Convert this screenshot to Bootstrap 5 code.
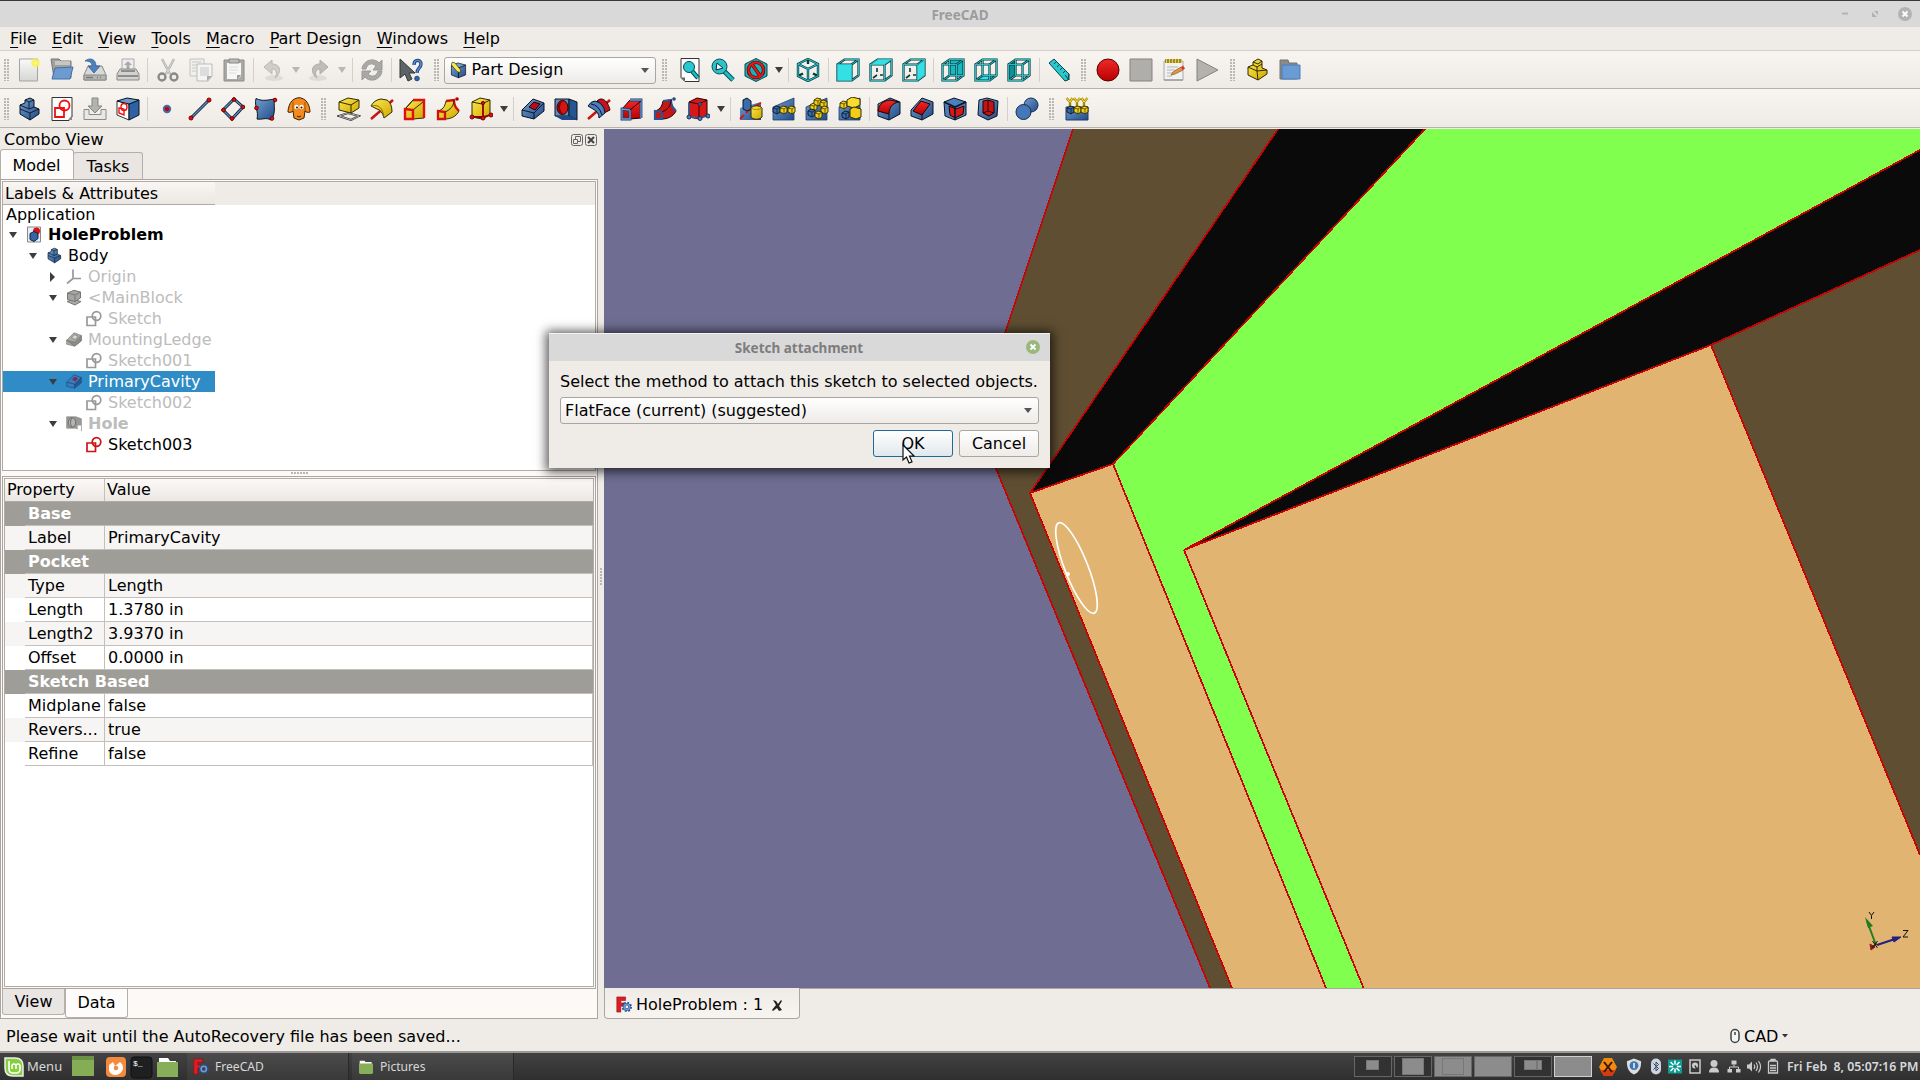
<!DOCTYPE html>
<html lang="en">
<head>
    <meta charset="UTF-8">
    <meta name="viewport" content="width=device-width, initial-scale=1.0">
    <title>FreeCAD</title>
    <link rel="stylesheet" href="https://cdn.jsdelivr.net/npm/bootstrap@5.3.3/dist/css/bootstrap.min.css">
    <script src="https://cdn.jsdelivr.net/npm/bootstrap@5.3.3/dist/js/bootstrap.bundle.min.js"></script>
    <style>
        body { width: 1920px; height: 1080px; overflow: hidden; background: #efebe7; color: #000; font: 16px/20px "DejaVu Sans", sans-serif; }
        svg { display: block; flex: none; overflow: visible; }
        .titlebar { height: 27px; background: #d9d9d9; border-top: 1px solid #3a373c; color: #9c9c9c; font: bold 13.5px/24px "Noto Sans", sans-serif; }
        .titlebar .caption-text { padding: 2px 0 0 94px; }
        .menubar { height: 24px; padding-left: 2.5px; border-bottom: 1px solid #d2cec9; }
        .menubar .nav-link { padding: 0 7.6px; color: #000; line-height: 24px; }
        .menubar u { text-underline-offset: 3px; text-decoration-thickness: 1px; }
        .toolbar { height: 38px; padding-top: 1px; border-bottom: 1px solid #b6b1ad; background: linear-gradient(#f8f5f1, #eeeae6); }
        .toolbar.second { height: 39px; padding-top: 2px; margin-bottom: 1px; }
        .slot { width: 33px; display: flex; justify-content: center; }
        .slot svg { width: 24px; height: 24px; }
        .tb-sep { width: 6.5px; display: flex; justify-content: center; }
        .tb-sep::after { content: ""; width: 1px; height: 24px; background: #d3cfca; }
        .second .tb-sep { width: 6.2px; }
        .arr { width: 13.2px; display: flex; justify-content: center; }
        .arr::after, .down { content: ""; border: 4.5px solid transparent; border-top: 6px solid #3d3d3d; border-bottom: 0; }
        .arr.off::after { border-top-color: #b9b6b3; }
        .grip { width: 16.6px; display: flex; justify-content: center; }
        .grip::after { content: ""; width: 5px; height: 22px; background: radial-gradient(circle at 1px 1px, #bbb6b1 0.8px, transparent 1px) 0 0/3px 3px; }
        .grip.first { width: 12.5px; }
        .boxy { border: 1px solid #a9a5a1; border-radius: 3px; background: linear-gradient(#fff, #eeebe8); }
        .workbench { width: 212px; height: 27px; padding: 0 6px 0 5px; }
        .workbench .down, .method .down { border-width: 4px 4px 0; border-top-width: 5px; border-top-color: #555; }
        .main { height: 890px; }
        .combo-view { width: 598px; }
        .combo-title { height: 21px; padding: 0 1px 0 4px; line-height: 21px; }
        .tabs-top { height: 29px; }
        .tab-a { border: 1px solid #b5b0ac; border-bottom: 0; border-radius: 3px 3px 0 0; text-align: center; }
        .tabs-top .on { width: 74px; background: #fdfcfa; height: 30px; line-height: 31px; padding-right: 1px; position: relative; z-index: 1; }
        .tabs-top .off { width: 70px; margin-left: -1px; height: 27px; line-height: 27px; background: #e9e5e2; }
        .frame { height: 840px; border: 1px solid #aaa5a1; background: #fdf9f6; padding: 1px 1px 0; }
        .tree { height: 290px; border: 1px solid #b0aba7; background: #fff; }
        .tree-head { height: 23px; background: #efebe7; }
        .tree-head div { width: 212px; height: 23px; padding-left: 2px; border-bottom: 1px solid #b0aba7; line-height: 23px; background: linear-gradient(#f9f6f3, #ebe7e3); }
        .tree-row { width: 212px; height: 21px; line-height: 21px; white-space: nowrap; color: #000; }
        .tree-row.app { height: 19px; padding-left: 3px; line-height: 20px; }
        .tree-row.off { color: #bcbcbc; }
        .tree-row.sel { background: #308cc6; color: #fff; }
        .tree-row .tw { width: 19px; flex: none; display: flex; justify-content: center; }
        .tree-row svg { width: 16px; height: 17px; margin-right: 6px; }
        .tw.open::after { content: ""; border: 4.5px solid transparent; border-top: 6px solid #3d3d3d; border-bottom: 0; }
        .tw.shut::after { content: ""; border: 5px solid transparent; border-left: 5px solid #3d3d3d; border-right: 0; }
        .indent { flex: none; }
        .i0 { width: 0; } .i1 { width: 20px; } .i2 { width: 40px; } .i3 { width: 60px; }
        .dots-h { height: 4px; width: 17px; margin: 1px auto 0; background: radial-gradient(circle at 1px 1px, #bbb6b1 0.8px, transparent 1px) 0 0/3px 4px repeat-x; }
        .props { height: 513px; border: 1px solid #aaa5a1; padding: 1px; }
        .props > div { height: 509px; border: 1px solid #b0aba7; background: #fff; }
        .prop-row { height: 24px; line-height: 23px; }
        .prop-row .pad { width: 20px; background: inherit; }
        .prop-row .pname { width: 80px; padding-left: 3px; border-right: 1px solid #c3c0bc; border-bottom: 1px solid #c3c0bc; white-space: nowrap; overflow: hidden; }
        .prop-row .pval { flex: 1; padding-left: 3px; border-right: 1px solid #c3c0bc; border-bottom: 1px solid #c3c0bc; }
        .prop-row.alt { background: #f6f5f3; }
        .prop-row.group { background: #9f9d98; color: #fff; font-weight: bold; }
        .prop-row.group .pval { padding-left: 3px; border-right: 0; }
        .prop-head { height: 23px; line-height: 22px; border-bottom: 1px solid #b0aba7; background: linear-gradient(#fcf9f7, #ebe7e4); }
        .prop-head .h1c { width: 100px; padding-left: 2px; border-right: 1px solid #c3c0bc; }
        .prop-head .h2c { padding-left: 2px; }
        .tab-b { border: 1px solid #b5b0ac; border-top: 0; border-radius: 0 0 3px 3px; text-align: center; }
        .tab-b.off { width: 63px; height: 26px; line-height: 25px; background: #e9e5e2; }
        .tab-b.on { width: 63px; height: 29px; line-height: 28px; background: #fdfcfa; }
        .vsplit { width: 6px; }
        .vsplit::after { content: ""; display: block; width: 2px; height: 18px; margin: 439px 0 0 2px; background: radial-gradient(circle at 1px 1px, #bbb6b1 0.8px, transparent 1px) 0 0/3px 3px; }
        .view3d { width: 1316px; height: 859px; }
        .mdi { height: 31px; }
        .mdi-tab { width: 196px; border: 1px solid #aaa5a1; border-top: 0; border-radius: 0 0 4px 4px; padding: 3px 0 0 11px; background: linear-gradient(#efebe7, #f8f5f1); }
        .mdi-rest { flex: 1; border-top: 1px solid #aaa5a1; }
        .status { height: 32px; padding-left: 6px; line-height: 35px; }
        .mouse-nav { width: 189px; padding-top: 2px; }
        .taskbar { height: 29px; border-top: 2px solid #9c9996; background: linear-gradient(#424242, #2f2f2f); color: #d8d8d8; font: 13px/25px "Noto Sans", sans-serif; }
        .menu-label { width: 35px; margin-left: 3px; }
        .task { height: 27px; width: 162px; margin-right: 3px; padding-left: 6px; background: linear-gradient(#4b4b4b, #393939); border-right: 1px solid #292929; font-size: 12.1px; }
        .task span { margin-left: 6px; }
        .ws { width: 38px; height: 21px; margin-right: 2px; border: 1px solid #666; background: #323232; display: flex; align-items: center; justify-content: center; }
        .ws.full { background: #8c8c8c; }
        .ws.cur { border-color: #d0d0d0; background: #8c8c8c; }
        .ws i { width: 13px; height: 10px; margin-bottom: 3px; background: #8c8c8c; border: 1px solid #777; }
        .ws i.big { width: 22px; height: 17px; margin: 0; background: #8c8c8c; border-color: #777; }
        .ws i.thin { width: 5px; }
        .tray svg { width: 16px; height: 17px; }
        .tray .cell { display: flex; justify-content: center; width: 19.6px; }
        .tray .cell.c-x { width: 28px; }
        .tray .cell.c-x svg { width: 18px; height: 18px; }
        .tray .cell.c-sh { width: 24px; }
        .clock { width: 129px; margin: 0 4px 0 4px; font-weight: 600; font-size: 12.3px; white-space: nowrap; color: #d6d9dd; }
        .dialog-win { position: absolute; left: 549px; top: 333px; width: 501px; height: 135px; background: #efebe7; border-top: 1px solid #f3f3f3; box-shadow: 0 1px 10px 3px rgba(0,0,0,.65); }
        .dlg-title { height: 27px; background: #d9d9d9; color: #7d7d7d; font: bold 13.5px/27px "Noto Sans", sans-serif; }
        .dlg-title .caption-text { padding: 1px 0 0 23px; }
        .dlg-title svg { margin: -1px 10px 0 0; }
        .dlg-body { padding: 10px 11px 0 11px; }
        .dlg-body p { white-space: nowrap; line-height: 22px; margin-bottom: 4px; }
        .method { height: 27px; padding: 0 6px 0 4px; }
        .btn-line { gap: 6px; margin-top: 6px; }
        .dlg-body .btn { width: 80px; height: 27px; padding: 0; border: 1px solid #a9a5a1; border-radius: 3px; color: #000; font-size: 16px; line-height: 25px; background: linear-gradient(#fff, #eeebe8); }
        .dlg-body .btn.ok { border-color: #1f6a9c; background: linear-gradient(#fff, #e0e8ec); }
        .pointer { position: absolute; left: 902px; top: 444px; }
    </style>
</head>
<body>

<svg width="0" height="0" class="position-absolute">
    <defs>
        <linearGradient id="gb" x1="0" y1="0" x2="1" y2="1"><stop offset="0" stop-color="#729fcf"/><stop offset="1" stop-color="#204a87"/></linearGradient>
        <linearGradient id="gy" x1="0" y1="0" x2="1" y2="1"><stop offset="0" stop-color="#fce94f"/><stop offset="1" stop-color="#d0a800"/></linearGradient>
        <linearGradient id="gr" x1="0" y1="0" x2="0" y2="1"><stop offset="0" stop-color="#ef2929"/><stop offset="1" stop-color="#b80000"/></linearGradient>
        <linearGradient id="gg" x1="0" y1="0" x2="0" y2="1"><stop offset="0" stop-color="#fafafa"/><stop offset="1" stop-color="#d5d5d3"/></linearGradient>
        <radialGradient id="glow"><stop offset="0" stop-color="#ffff60"/><stop offset=".5" stop-color="#f8f060"/><stop offset="1" stop-color="#f8f060" stop-opacity="0"/></radialGradient>
    </defs>

    <!-- file toolbar -->
    <symbol id="new" viewBox="0 0 24 24"><path d="M2.500 1h18v22h-18z" fill="url(#gg)" stroke="#a5a5a0"/><circle cx="18.500" cy="5" r="5.500" fill="url(#glow)"/></symbol>
    <symbol id="open" viewBox="0 0 24 24"><path d="M1 1h8l2 2h10v17H4z" fill="#a0a09c" stroke="#777"/><path d="M5 4h15M5 6h15" stroke="#eee"/><path d="M5 10l18-1-3 12H2z" fill="#6d9bd0" stroke="#3f70ad"/></symbol>
    <symbol id="save" viewBox="0 0 24 24"><path d="M5 8h14l4 9v5H1v-5z" fill="#d9d9d6" stroke="#888"/><path d="M1 17h22v5H1z" fill="#b5b5b1" stroke="#888"/><path d="M3 19.500h7M14 19.500h1m2 0h1" stroke="#777" stroke-width="1.500"/><path d="M2 3c5-4 11-2 11 5h4l-6 7-6-7h4c0-4-3-5-7-5z" fill="#4d82bf" stroke="#28558d" stroke-width=".7"/></symbol>
    <symbol id="print" viewBox="0 0 24 24"><path d="M6 1h12v12H6z" fill="#eee" stroke="#aaa"/><path d="M12 3l4 4h-2.500v5h-3V7H8z" fill="#aaa"/><path d="M4 11h16l3 5v6H1v-6z" fill="#d2d2cf" stroke="#888"/><path d="M5 13h14M2 18h20" stroke="#777" stroke-width="1.300"/></symbol>
    <symbol id="cut" viewBox="0 0 24 24"><path d="M6 1l8 15M18 1l-8 15" stroke="#aaa" stroke-width="2.400"/><path d="M6 1l8 15M18 1l-8 15" stroke="#e4e4e4" stroke-width=".8"/><circle cx="6" cy="19" r="3.500" fill="none" stroke="#898989" stroke-width="2.300"/><circle cx="18" cy="19" r="3.500" fill="none" stroke="#898989" stroke-width="2.300"/></symbol>
    <symbol id="copy" viewBox="0 0 24 24"><path d="M1 1h14v17H1z" fill="#efefed" stroke="#c2c2c0"/><path d="M3 4h9M3 7h9M3 10h4M3 13h4" stroke="#c8c8c8"/><path d="M8 6h15v12l-4 5H8z" fill="#f4f4f2" stroke="#bbb"/><path d="M11 9h9v9h-9z" fill="#ddd"/><path d="M23 18h-5v5z" fill="#aaa"/></symbol>
    <symbol id="paste" viewBox="0 0 24 24"><path d="M2 2h20v21H2z" fill="#aaa9a5" stroke="#8c8c88"/><path d="M5 5h14v13l-3 3H5z" fill="#f7f7f5"/><path d="M7 1h10v4H7z" fill="#bbb" stroke="#888"/><path d="M7 9h9M7 12h9M7 15h7" stroke="#ddd"/><path d="M19 17h-4v5z" fill="#999"/></symbol>
    <symbol id="undo" viewBox="0 0 24 24"><ellipse cx="13" cy="20" rx="9" ry="3" fill="#dedbd8"/><path d="M3 9l8-7v4c9 0 10 9 3 14 3-5 1-9-3-9v5z" fill="#cfcdca" stroke="#bab7b3"/></symbol>
    <symbol id="redo" viewBox="0 0 24 24"><ellipse cx="11" cy="20" rx="9" ry="3" fill="#dedbd8"/><path d="M21 9l-8-7v4C4 6 3 15 10 20c-3-5-1-9 3-9v5z" fill="#bfbdba" stroke="#aeaba7"/></symbol>
    <symbol id="refresh" viewBox="0 0 24 24"><path d="M2 11c1-9 12-12 17-6l3-3v10h-9l3-4c-4-4-9-2-10 3zM22 13c-1 9-12 12-17 6l-3 3V13h9l-3 3c4 4 9 2 10-3z" fill="#a9a8a4" stroke="#999"/></symbol>
    <symbol id="whatis" viewBox="0 0 24 24"><path d="M1 1v19l5-4 3 7 4-2-3-6h6z" fill="#5d6466" stroke="#303638"/><path d="M15 7c0-6 7-6 7-1 0 4-4 4-4 9" fill="none" stroke="#204a87" stroke-width="3.400"/><path d="M15 7c0-6 7-6 7-1 0 4-4 4-4 9" fill="none" stroke="#6090c8" stroke-width="1.400"/><circle cx="18" cy="20.500" r="2.300" fill="#3465a4" stroke="#204a87"/></symbol>
    <symbol id="wb" viewBox="0 0 24 24"><path d="M2 6l10 3v14L2 19zM12 9l10-4v14l-10 4z" fill="url(#gb)" stroke="#0b1521"/><path d="M2 6l9-4 11 3-10 4z" fill="#729fcf" stroke="#0b1521"/><path d="M3 1l4 1 8 10-1 4-4-2L2 5z" fill="#fce94f" stroke="#403800"/></symbol>

    <!-- view toolbar -->
    <symbol id="fitall" viewBox="0 0 24 24"><path d="M3 .5h18v23H7l-4-4z" fill="#fdfdfd" stroke="#333"/><path d="M3 19.500h4v4z" fill="#666"/><path d="M14 13l6 7" stroke="#0b4a50" stroke-width="4.500"/><path d="M14 13l6 7" stroke="#16c0c8" stroke-width="2.500"/><circle cx="11" cy="9" r="5.500" fill="#28c9cf" stroke="#0b4a50"/></symbol>
    <symbol id="fitsel" viewBox="0 0 24 24"><path d="M13 13l9 9" stroke="#0b4a50" stroke-width="5"/><path d="M13 13l9 9" stroke="#16c0c8" stroke-width="3"/><circle cx="8.500" cy="8.500" r="7.500" fill="#2cc2c8" stroke="#0b4a50"/><path d="M5 12l1-7 6 5z" fill="#e8ffff" stroke="#124"/></symbol>
    <symbol id="drawstyle" viewBox="0 0 24 24"><path d="M12 .5l11 5.500v12l-11 5.500L1 18V6z" fill="#16b4bc" stroke="#08484c"/><circle cx="12" cy="12" r="7.600" fill="none" stroke="#400" stroke-width="3.400"/><path d="M7.500 5.500l9 13" stroke="#400" stroke-width="3.400"/><circle cx="12" cy="12" r="7.600" fill="none" stroke="#e01818" stroke-width="2.200"/><path d="M7.500 5.500l9 13" stroke="#e01818" stroke-width="2.200"/></symbol>
    <symbol id="iso" viewBox="0 0 24 24"><path d="M12 1l10 5v12l-10 5-10-5V6zM2 6l10 5 10-5M12 11v12M12 1v5M2 18l5-2.500m15 2.500l-5-2.500" fill="none" stroke="#06383c" stroke-width="2.400"/><path d="M12 1l10 5v12l-10 5-10-5V6zM2 6l10 5 10-5M12 11v12" fill="none" stroke="#22c3c9" stroke-width="1.100"/></symbol>
    <g id="wirebox"><path d="M1.500 6.500h14v16h-14zM1.500 6.500l7-5h14v16l-7 5M15.500 6.500l7-5M8.500 1.500v16h14M8.500 17.500l-7 5" fill="none" stroke="#06383c" stroke-width="2.200"/><path d="M1.500 6.500h14v16h-14zM1.500 6.500l7-5h14v16l-7 5M15.500 6.500l7-5M8.500 1.500v16h14M8.500 17.500l-7 5" fill="none" stroke="#2acbd0" stroke-width=".9"/></g>
    <g id="shellbox"><path d="M1.500 6.500h14v16h-14zM1.500 6.500l7-5h14v16l-7 5M15.500 6.500l7-5" fill="none" stroke="#06383c" stroke-width="2.200"/><path d="M1.500 6.500h14v16h-14zM1.500 6.500l7-5h14v16l-7 5M15.500 6.500l7-5" fill="none" stroke="#2acbd0" stroke-width=".9"/></g>
    <symbol id="vfront" viewBox="0 0 24 24"><use href="#shellbox"/><path d="M2 7h13v15H2z" fill="#34dfe6"/></symbol>
    <symbol id="vtop" viewBox="0 0 24 24"><use href="#shellbox"/><path d="M2.500 6.300l6.300-4.500H22l-6.500 4.500z" fill="#34dfe6"/><path d="M4 20l4-3M8 10v4m3 3h3" stroke="#06383c" stroke-width="1.600"/></symbol>
    <symbol id="vright" viewBox="0 0 24 24"><use href="#shellbox"/><path d="M16 7l6-4.500v15L16 22z" fill="#34dfe6"/><path d="M4 20l4-3M8 10v4m3 3h3" stroke="#06383c" stroke-width="1.600"/></symbol>
    <symbol id="vrear" viewBox="0 0 24 24"><path d="M8.500 2h14v15h-14z" fill="#1cb6bd"/><use href="#wirebox"/></symbol>
    <symbol id="vbottom" viewBox="0 0 24 24"><path d="M2 22l7-5h13l-6 5z" fill="#34dfe6"/><use href="#wirebox"/></symbol>
    <symbol id="vleft" viewBox="0 0 24 24"><path d="M2 7l6-5v15l-6 5z" fill="#148e94"/><use href="#wirebox"/></symbol>
    <symbol id="measure" viewBox="0 0 24 24"><path d="M2 5l5-4 15 15-1 6-3 1z" fill="#28c6cd" stroke="#06484c"/><path d="M7 1l15 15v6L18 17M9 4l-2 2m5 1l-2 2m5 1l-2 2m5 1l-2 2" fill="none" stroke="#06484c"/></symbol>
    <symbol id="rec" viewBox="0 0 24 24"><circle cx="12" cy="12" r="11" fill="url(#gr)" stroke="#500"/></symbol>
    <symbol id="stop" viewBox="0 0 24 24"><path d="M1 1h22v22H1z" fill="#b0aeab" stroke="#85837f"/></symbol>
    <symbol id="macro" viewBox="0 0 24 24"><path d="M2 3h19v19H2z" fill="#f1f1f1" stroke="#aaa"/><path d="M2 22h19" stroke="#888"/><path d="M3 1h17v4H3z" fill="#a28a1d"/><path d="M4.500 1v4m3-4v4m3-4v4m3-4v4m3-4v4m3-4v4" stroke="#e3cc4d"/><path d="M5 9h11M5 12h8M5 15h5M5 18h5" stroke="#b5b5b5"/><path d="M9 17l2-3 8-5 2 3-8 4z" fill="#e39a3c" stroke="#85511b" stroke-width=".7"/><path d="M19 9l2 3 2-1.500-2-3z" fill="#d33"/></symbol>
    <symbol id="play" viewBox="0 0 24 24"><path d="M2 1l21 11L2 23z" fill="#b4b2af" stroke="#85837f"/></symbol>
    <symbol id="part" viewBox="0 0 24 24"><path d="M3 9l5-2V4l5-3 4 2v7l5 2v4l-9 6-10-5z" fill="url(#gy)" stroke="#302b00"/><path d="M3 9l9 4 10-1M8 7l4 2 5-3M12 9v4l1 9M8 4l5 2 4-3" fill="none" stroke="#302b00"/></symbol>
    <symbol id="group" viewBox="0 0 24 24"><path d="M2 2h8l1 3h8v16H2z" fill="#8a8b89" stroke="#737472"/><path d="M4 7h18v14H4z" fill="#699bd4" stroke="#4c7db5"/></symbol>

    <!-- part design -->
    <symbol id="body" viewBox="0 0 24 24"><path d="M3 8l5-2V3l5-2 4 2v7l5 2v5l-9 6-10-6z" fill="url(#gb)" stroke="#0b1521"/><path d="M8 3l4 2 5-2M12 5v7l5-2M12 12l-9-4M13 23v-7l9-4M13 16l-10-4" fill="none" stroke="#0b1521" stroke-width=".9"/></symbol>
    <symbol id="sketch" viewBox="0 0 24 24"><path d="M2 .5h20V20l-3 3.500H2z" fill="#fdfdfd" stroke="#333"/><path d="M18 23l4-5v5z" fill="#888"/><path d="M5 11h9v9H5z" fill="none" stroke="#e11" stroke-width="1.800"/><circle cx="14.500" cy="8.500" r="5" fill="none" stroke="#e11" stroke-width="1.800"/></symbol>
    <symbol id="import" viewBox="0 0 24 24"><path d="M1 12.500h5v5h12v-5h5v10H1z" fill="#e8e8e6" stroke="#8a8a88"/><path d="M9 1h6v8h4l-7 7-7-7h4z" fill="#b2b2af" stroke="#868684"/></symbol>
    <symbol id="mapsk" viewBox="0 0 24 24"><path d="M1 4l12 3v16L1 18z" fill="#fff" stroke="#333"/><path d="M13 7l10-4v15l-10 5z" fill="#2e62a4" stroke="#0b1521"/><path d="M1 4l10-3 12 2-10 4z" fill="#6c9acc" stroke="#0b1521"/><ellipse cx="8" cy="10" rx="3" ry="3.500" fill="none" stroke="#e11" stroke-width="1.400"/><path d="M3 11l5 1v6l-5-2z" fill="none" stroke="#e11" stroke-width="1.400"/></symbol>
    <symbol id="point" viewBox="0 0 24 24"><circle cx="12" cy="12" r="4.200" fill="#3b6db0"/><circle cx="12" cy="12" r="2.300" fill="#d00000"/></symbol>
    <symbol id="line" viewBox="0 0 24 24"><path d="M3 21L21 3" stroke="#0b1521" stroke-width="3"/><path d="M3 21L21 3" stroke="#5b8cc6" stroke-width="1.400"/><g fill="#d11" stroke="#700"><circle cx="3" cy="21" r="2"/><circle cx="21" cy="3" r="2"/></g></symbol>
    <symbol id="plane" viewBox="0 0 24 24"><path d="M13 2l9 8-11 12-9-9z" fill="none" stroke="#0b1521" stroke-width="3"/><path d="M13 2l9 8-11 12-9-9z" fill="none" stroke="#5b8cc6" stroke-width="1.400"/><g fill="#d11" stroke="#700"><circle cx="13" cy="2.500" r="1.800"/><circle cx="22" cy="10" r="1.800"/><circle cx="11" cy="21.500" r="1.800"/><circle cx="2.500" cy="13" r="1.800"/></g></symbol>
    <symbol id="binder" viewBox="0 0 24 24"><path d="M2 1.500c7 3.500 13 1 19 .5-2 7 1 9-2 18l-2 3c-5-3-9 0-14-1 2-8-3-12-1-20.500z" fill="url(#gb)" stroke="#0b1521"/><g fill="#d11" stroke="#700"><circle cx="2.500" cy="11" r="1.800"/><circle cx="21" cy="3" r="1.800"/><circle cx="18" cy="21.500" r="1.800"/></g></symbol>
    <symbol id="clone" viewBox="0 0 24 24"><path d="M6 3c4-3 8-3 12 0 3 2 5 8 5 12-2 1-4 0-5-1l-1 7-5 2-5-2-1-7c-1 1-3 2-5 1 0-4 2-10 5-12z" fill="#f28a1e" stroke="#3a1d00"/><path d="M6 5v9m12-9v9" stroke="#8f4a00" stroke-width=".8"/><circle cx="9.500" cy="10" r="2.200" fill="#fff"/><circle cx="14.500" cy="10" r="2.200" fill="#fff"/><circle cx="10" cy="10.500" r="1" fill="#111"/><circle cx="14.500" cy="10.500" r="1" fill="#111"/><path d="M10 19q2 2 4 0" fill="none" stroke="#3a1d00"/></symbol>
    <symbol id="pad" viewBox="0 0 24 24"><path d="M2 19l9-3 11 3-8 4z" fill="none" stroke="#333" stroke-width="2"/><path d="M2 19l9-3 11 3-8 4z" fill="none" stroke="#ddd" stroke-width=".7"/><path d="M2 5l9-4 11 2v8l-8 5-12-3z" fill="url(#gy)" stroke="#302b00"/><path d="M2 5l12 3 8-5M14 8v8" fill="none" stroke="#302b00"/></symbol>
    <symbol id="revol" viewBox="0 0 24 24"><path d="M1 22L23 3" stroke="#c11" stroke-width="2.500"/><path d="M1 9Q4 3 11 2l6 1q5 3 5 12l-8 6q-2-8-7-9z" fill="url(#gy)" stroke="#302b00"/><path d="M1 9l5-.500q7 1 8 12.500" fill="none" stroke="#7d6800" stroke-width=".9"/></symbol>
    <symbol id="loft" viewBox="0 0 24 24"><path d="M2 12L10 3h11v18L10 22H2z" fill="url(#gy)" stroke="#302b00"/><path d="M10 3h11v18M2 12l8 1v9H2z" fill="none" stroke="#d11" stroke-width="2.400"/><path d="M10.500 12.500L20 5M3 11l7-8" stroke="#302b00"/></symbol>
    <symbol id="pipe" viewBox="0 0 24 24"><path d="M10 4l8-1c0 6 2 8 5 11-3 6-9 8-14 8H2v-8c4-1 7-4 8-10z" fill="url(#gy)" stroke="#302b00"/><path d="M2 14l7 1v7H2zM10 4l8-1c0 6 2 8 5 11" fill="none" stroke="#c11" stroke-width="2.300"/><path d="M9 15c5-2 9-6 9-12" fill="none" stroke="#302b00"/><circle cx="21" cy="2" r="1.800" fill="#a00"/></symbol>
    <symbol id="prim" viewBox="0 0 24 24"><path d="M3 5l8-4 10 2v15l-8 4-10-2z" fill="url(#gy)" stroke="#302b00"/><path d="M3 5l10 2 8-4" fill="none" stroke="#302b00"/><path d="M14 6v13M3 20h11l7-2" fill="none" stroke="#8d0000" stroke-width="1.800"/><g fill="#d11" stroke="#700"><circle cx="14" cy="6" r="1.600"/><circle cx="3" cy="20" r="2"/><circle cx="14" cy="21" r="2"/><circle cx="22" cy="18" r="2"/></g></symbol>
    <symbol id="pocket" viewBox="0 0 24 24"><path d="M1 13L12 2l11 4v8L13 22 1 19z" fill="url(#gb)" stroke="#0b1521"/><path d="M1 13l12 3L23 6M13 16v6" fill="none" stroke="#0b1521"/><path d="M8 10l5-5 6 2-5 6z" fill="#b80f1c" stroke="#200"/></symbol>
    <symbol id="pocksel" viewBox="0 0 24 24"><path d="M1 13L12 2l11 4v8L13 22 1 19z" fill="#3a7cc0" stroke="#1a4a80"/><path d="M13 16L23 6v8l-10 8z" fill="#24578f"/><path d="M1 13l12 3L23 6M13 16v6" fill="none" stroke="#173f6d"/><path d="M9 9l4-4 5 2-4 5z" fill="#7c2a50"/></symbol>
    <symbol id="hole" viewBox="0 0 24 24"><path d="M1 2h14v17H1z" fill="#5d8dc4" stroke="#0b1521"/><path d="M15 2l8 3v18l-8-4z" fill="#26568f" stroke="#0b1521"/><path d="M1 19h14l8 4H8z" fill="#204a87"/><ellipse cx="8.500" cy="10.500" rx="5.500" ry="7" fill="#d51414" stroke="#200"/><path d="M9 4c-4 3-4 9 0 13-5 1-8-12 0-13z" fill="#7a0000"/></symbol>
    <symbol id="groove" viewBox="0 0 24 24"><path d="M1 22L23 3" stroke="#c11" stroke-width="2.500"/><path d="M10 4c5-5 11 0 13 9l-6 3c0-5-3-9-7-12z" fill="#c31220" stroke="#300"/><path d="M1 9Q4 4 8 4q9 2 10 12l-6 5q0-6-6-9z" fill="#4a7fbd" stroke="#0b1521"/><path d="M4 7q8 1 11 11" fill="none" stroke="#0b1521"/></symbol>
    <symbol id="subloft" viewBox="0 0 24 24"><path d="M2 12L10 3h11v18L10 22H2z" fill="url(#gr)" stroke="#200"/><path d="M10 3h11v18M2 12l8 1v9H2z" fill="none" stroke="#1d3d6b" stroke-width="2.800"/><path d="M10 3h11v18M2 12l8 1v9H2z" fill="none" stroke="#6a96cc" stroke-width="1.300"/><path d="M10 13L21 4" stroke="#300"/></symbol>
    <symbol id="subpipe" viewBox="0 0 24 24"><path d="M10 4l8-1c0 6 2 8 5 11-3 6-9 8-14 8H2v-8c4-1 7-4 8-10z" fill="#c71616" stroke="#200"/><path d="M2 14l7 1v7H2zM10 4l8-1c0 6 2 8 5 11" fill="none" stroke="#2b5694" stroke-width="2.200"/><path d="M9 15c5-2 9-6 9-12" fill="none" stroke="#300"/><circle cx="21" cy="2" r="1.800" fill="#2b4a7c"/></symbol>
    <symbol id="subprim" viewBox="0 0 24 24"><path d="M3 5l8-4 10 2v15l-8 4-10-2z" fill="#d81818" stroke="#200"/><path d="M3 5l10 2v15M13 7l8-4" fill="none" stroke="#300"/><path d="M3 6v14l11 1 7-2" fill="none" stroke="#345f98" stroke-width="1.700"/><g fill="#4d7fbd" stroke="#173257"><circle cx="14" cy="7" r="1.400"/><circle cx="3" cy="20" r="2"/><circle cx="14" cy="21.500" r="2"/><circle cx="22" cy="19" r="2"/></g></symbol>
    <g id="ramp"><path d="M1 10L22 1v22H1z" fill="url(#gb)" stroke="#1c3d6c" stroke-width=".8"/></g>
    <g id="ycube"><path d="M0 2l3-2 4 1v5L4 8 0 6z" fill="#f2cf16" stroke="#302b00" stroke-width=".9"/><path d="M0 2l4 1 3-2M4 3v5" fill="none" stroke="#302b00" stroke-width=".7"/></g>
    <g id="bcube"><path d="M0 2l3-2 4 1v5L4 8 0 6z" fill="#3a6bab" stroke="#0b1521" stroke-width=".9"/><path d="M0 2l4 1 3-2M4 3v5" fill="none" stroke="#0b1521" stroke-width=".7"/></g>
    <symbol id="mirror" viewBox="0 0 24 24"><path d="M1 11L22 5v18H1z" fill="url(#gb)"/><path d="M1 22l4-4m2-2l4-4M16 9l6-3" stroke="#d11" stroke-width="1.800"/><path d="M4 3l4-2 4 3v8l-4 2-4-2z" fill="#3a6bab" stroke="#0b1521"/><path d="M12 11c3-3 8-3 11 0v9c-3 3-8 3-11 0z" fill="url(#gy)" stroke="#302b00"/><path d="M12 11c3 2 8 2 11 0" fill="none" stroke="#a58700"/></symbol>
    <symbol id="linear" viewBox="0 0 24 24"><use href="#ramp"/><use href="#bcube" x="1" y="9"/><use href="#ycube" x="8" y="9"/><use href="#ycube" x="16" y="9"/></symbol>
    <symbol id="polar" viewBox="0 0 24 24"><use href="#ramp"/><use href="#ycube" x="5" y="6"/><use href="#ycube" x="9" y="1"/><use href="#ycube" x="15" y="3"/><use href="#ycube" x="16" y="9"/><use href="#bcube" x="3" y="12"/><use href="#ycube" x="10" y="14"/></symbol>
    <symbol id="multi" viewBox="0 0 24 24"><use href="#ramp"/><use href="#ycube" x="2" y="4"/><path d="M9 3l5-3 8 2v6l-6 3-7-2z" fill="#fadc2e" stroke="#302b00"/><use href="#bcube" x="4" y="14"/><path d="M12 12l4-2 7 2v8l-5 2-6-2z" fill="#f2cf16" stroke="#302b00"/></symbol>
    <symbol id="fillet" viewBox="0 0 24 24"><path d="M1 7L13 1l10 4v12l-11 6-11-4z" fill="url(#gb)" stroke="#0b1521"/><path d="M1 14c1-7 5-10 12-11l9 2c-7 1-10 6-10 12z" fill="url(#gr)" stroke="#200"/><path d="M12 17v6" stroke="#0b1521"/></symbol>
    <symbol id="chamfer" viewBox="0 0 24 24"><path d="M1 13L12 1l11 4v12l-11 6-11-4z" fill="url(#gb)" stroke="#0b1521"/><path d="M3 14L11 4l9 3-8 11z" fill="url(#gr)" stroke="#200"/><path d="M12 18v5" stroke="#0b1521"/></symbol>
    <symbol id="draft" viewBox="0 0 24 24"><path d="M1 5l10-4 12 4v13l-11 5-10-4z" fill="#4c7fbc" stroke="#0b1521"/><path d="M6 9l7 3 8-3-1 8-8 4-5-3z" fill="#d81818" stroke="#200"/><path d="M1 5l11 5 11-5M12 10v13" fill="none" stroke="#0b1521" stroke-width="1.600"/></symbol>
    <symbol id="thick" viewBox="0 0 24 24"><path d="M3 3l8-2 11 3-1 15-9 4-10-5z" fill="url(#gb)" stroke="#0b1521"/><path d="M7 4l5-1 6 2v11l-5 3-6-3z" fill="#c31414" stroke="#200"/><path d="M12 3v11l6 2M12 14l-5 2" fill="none" stroke="#400"/></symbol>
    <symbol id="boolean" viewBox="0 0 24 24"><circle cx="16" cy="8" r="7" fill="url(#gb)" stroke="#152c4d"/><circle cx="8.500" cy="15" r="7.500" fill="#4478b8" stroke="#152c4d"/></symbol>
    <symbol id="gears" viewBox="0 0 24 24"><path d="M1 10h22v13H1z" fill="url(#gb)" stroke="#1c3d6c"/><path d="M1.500 1l3.500 4 2.500-4M9 1l3 4 3-4M16.500 1l2.500 4 3.500-4M5 4v6m7-6v6m7-6v6" fill="none" stroke="#a88a00" stroke-width="2.400"/><path d="M1.500 1l3.500 4 2.500-4M9 1l3 4 3-4M16.500 1l2.500 4 3.500-4" fill="none" stroke="#f6e34b"/><use href="#bcube" x="2" y="9"/><use href="#ycube" x="9" y="9"/><use href="#ycube" x="16" y="9"/></symbol>

    <!-- tree -->
    <symbol id="doc" viewBox="0 0 16 16"><path d="M1.500.5h13v15h-13z" fill="#e9eef2" stroke="#8a8a8a"/><circle cx="10.500" cy="4.500" r="3.500" fill="#d11"/><path d="M4 7l4-2 4 2v5l-4 3-4-2z" fill="#3465a4" stroke="#10233c"/></symbol>
    <symbol id="origin" viewBox="0 0 16 16"><path d="M7 1v9h8M7 10l-6 5" fill="none" stroke="#999" stroke-width="1.700"/></symbol>
    <symbol id="padg" viewBox="0 0 16 16"><path d="M1 12l6-2 8 2-6 3.500z" fill="#aaa" stroke="#777"/><path d="M1.500 3.500L8 .8l6.500 1.700v6L9 12l-7.500-2z" fill="#a5a5a2" stroke="#777"/><path d="M1.500 3.500L9 5.500l5.500-3M9 6v6" fill="none" stroke="#787876"/></symbol>
    <symbol id="sk" viewBox="0 0 16 16"><path d="M1 6.500h8.500V15H1z" fill="none" stroke="currentColor" stroke-width="1.700"/><circle cx="10.500" cy="5.500" r="4.300" fill="none" stroke="currentColor" stroke-width="1.700"/></symbol>
    <symbol id="pockg" viewBox="0 0 24 24"><path d="M1 13L12 2l11 4v8L13 22 1 19z" fill="#aaa9a5" stroke="#777"/><path d="M1 13l12 3L23 6v8l-10 8z" fill="#8b8b88" stroke="#777"/><path d="M8 9l5-4 5 2-4 5z" fill="#d8d8d8" stroke="#777"/></symbol>
    <symbol id="holeg" viewBox="0 0 24 24"><path d="M1 2h14l8 3v18l-8-4H1z" fill="#999996" stroke="#858582"/><ellipse cx="9" cy="10.500" rx="5.500" ry="7" fill="#b4b4b2" stroke="#555"/><path d="M9 4c-3 3-3 9 0 13" fill="none" stroke="#666" stroke-width="1.500"/><path d="M20 15v8" stroke="#fff" stroke-width="5"/></symbol>

    <!-- panel -->
    <symbol id="fc" viewBox="0 0 20 20"><path d="M1 .5h11V5H6v3h4v4H6v7.500H1z" fill="#e01b24" stroke="#8a0c10" stroke-width=".7"/><circle cx="13.500" cy="13" r="5.300" fill="none" stroke="#2a518c" stroke-width="2.400" stroke-dasharray="2.200 1.960"/><circle cx="13.500" cy="13" r="3.300" fill="none" stroke="#2a518c" stroke-width="3.200"/><circle cx="13.500" cy="13" r="3.300" fill="none" stroke="#6d9ad0" stroke-width="2"/></symbol>
    <symbol id="folder" viewBox="0 0 20 20"><path d="M1 1h7l1 2h9v5H1z" fill="#fff"/><path d="M0 5h20v13q0 2-2 2H2q-2 0-2-2z" fill="#87ae58"/></symbol>
</svg>

<div class="titlebar d-flex align-items-center">
    <div class="caption-text flex-fill text-center">FreeCAD</div>
    <svg width="94" height="20" viewBox="0 0 94 20"><path d="M16 9.500h6" stroke="#b3b3b3" stroke-width="2"/><path d="M46 8v5h5zM48 7h4v4z" fill="#b3b3b3"/><circle cx="79" cy="10" r="7" fill="#b3b3b3"/><path d="M76.500 7.500l5 5m0-5l-5 5" stroke="#fff" stroke-width="1.800"/></svg>
</div>

<nav class="nav menubar flex-nowrap">
    <a class="nav-link"><u>F</u>ile</a>
    <a class="nav-link"><u>E</u>dit</a>
    <a class="nav-link"><u>V</u>iew</a>
    <a class="nav-link"><u>T</u>ools</a>
    <a class="nav-link"><u>M</u>acro</a>
    <a class="nav-link"><u>P</u>art Design</a>
    <a class="nav-link"><u>W</u>indows</a>
    <a class="nav-link"><u>H</u>elp</a>
</nav>

<div class="toolbar d-flex align-items-center" data-items="new open save print | cut copy paste | undo v- redo v- | refresh | whatis"></div>
<div class="toolbar second d-flex align-items-center" data-items="body sketch import mapsk | point line plane binder clone : pad revol loft pipe prim v | pocket hole groove subloft subpipe subprim v | mirror linear polar multi | fillet chamfer draft thick | boolean : gears"></div>

<div class="main d-flex">
    <div class="combo-view">
        <div class="combo-title d-flex justify-content-between align-items-center">
            <span>Combo View</span>
            <svg width="26" height="12" viewBox="0 0 26 12"><g fill="none" stroke="#666"><rect x=".5" y=".5" width="11" height="11" rx="2"/><path d="M2.500 5.500h4v4h-4zM4.500 5V2.500h5v5H7"/><rect x="14.500" y=".5" width="11" height="11" rx="2"/></g><path d="M17 3l6 6m0-6l-6 6" stroke="#444" stroke-width="2"/></svg>
        </div>
        <div class="tabs-top d-flex align-items-end">
            <div class="tab-a on">Model</div>
            <div class="tab-a off">Tasks</div>
        </div>
        <div class="frame">
            <div class="tree">
                <div class="tree-head"><div>Labels &amp; Attributes</div></div>
                <div class="tree-row app">Application</div>
                <div id="tree_rows"></div>
            </div>
            <div class="dots-h"></div>
            <div class="props">
                <div>
                    <div class="prop-head d-flex"><div class="h1c">Property</div><div class="h2c">Value</div></div>
                    <div id="prop_rows"></div>
                </div>
            </div>
            <div class="d-flex">
                <div class="tab-b off">View</div>
                <div class="tab-b on">Data</div>
            </div>
        </div>
    </div>
    <div class="vsplit"></div>
    <div>
        <svg class="view3d" viewBox="604 129 1316 859" style="overflow:hidden">
            <path d="M604 129h1316v859H604z" fill="#6f6e92"/>
            <path d="M1073 129H1920V988H1210L976 420z" fill="#5f4e32"/>
            <path d="M1278 129H1920V250L1711 345 1184 550 1030 493z" fill="#0a0a0a"/>
            <path d="M1425 129H1920V150L1184 550 1363.500 988H1326L1113 464z" fill="#80ff4f"/>
            <path d="M1030 493l83-29L1326 988H1232z" fill="#e1b471"/>
            <path d="M1184 550L1711 345 1920 855V988H1363.500z" fill="#e1b471"/>
            <g fill="none" stroke="#cc0000" stroke-width="1.700" shape-rendering="crispEdges">
                <path d="M1073 129L976 420 1210 988"/>
                <path d="M1278 129L1030 493l83-29L1425 129M1030 493l202 495M1113 464l213 524"/>
                <path d="M1920 150L1184 550 1711 345l209-95M1184 550l179.500 438M1711 345l209 510"/>
            </g>
            <ellipse cx="1076.500" cy="568" rx="11.500" ry="48.500" transform="rotate(-21.500 1076.500 568)" fill="none" stroke="#fff" stroke-width="1.700"/>
            <circle cx="1068" cy="574" r="2" fill="#fff"/>
            <path d="M1876 945l-9-24" stroke="#1f7d1f" stroke-width="2"/><path d="M1865 917l8 9-5 2z" fill="#1f7d1f"/>
            <path d="M1877 945l18-6" stroke="#202080" stroke-width="2"/><path d="M1901 937l-9 0 2 5z" fill="#202080" stroke="#202080"/>
            <path d="M1877 944l-6 3m-1-3l1 6 4-3z" fill="#8b1c1c" stroke="#8b1c1c"/>
            <g fill="none" stroke="#111"><path d="M1869 912l2.500 3.500 2.500-3.500m-2.500 3.500v3.500M1903 930.500h5l-5 6.500h5M1872.500 941l5 7m0-7l-5 7"/></g>
        </svg>
        <div class="mdi d-flex">
            <div class="mdi-tab d-flex align-items-center">
                <svg width="16" height="17"><use href="#fc"/></svg>
                <span class="ms-1">HoleProblem : 1</span>
                <svg class="ms-2" width="12" height="12" viewBox="0 0 12 12"><path d="M2 1l3 1 2 3 3-4 1 1-3 5 3 4-3 1-2-3-4 3-1-1 4-5z" fill="#222"/></svg>
            </div>
            <div class="mdi-rest"></div>
        </div>
    </div>
</div>

<div class="status d-flex justify-content-between">
    <span>Please wait until the AutoRecovery file has been saved...</span>
    <div class="mouse-nav d-flex align-items-center">
        <svg width="13" height="16" viewBox="0 0 13 16"><rect x="0" y="1.500" width="8" height="13" rx="4" fill="#f5f5f5" stroke="#3c4446" stroke-width="1.500"/><path d="M4 4v3" stroke="#3c4446" stroke-width="1.500"/></svg>
        <span>CAD</span>
        <svg class="ms-1" width="7" height="4"><path d="M0 0h6L3 3.500z" fill="#333"/></svg>
    </div>
</div>

<div class="taskbar d-flex align-items-center">
    <svg class="ms-1" width="20" height="20" viewBox="0 0 20 20"><path d="M1 1h10q8 0 8 8v10H9q-8 0-8-8z" fill="#87cf3e" stroke="#eee" stroke-width="1.500"/><path d="M5 4v8q0 4 4 4h3q4 0 4-4V9q0-2-2-2t-2 2v3m0-3q0-2-2-2t-2 2v3" fill="none" stroke="#fff" stroke-width="1.600"/></svg>
    <span class="menu-label">Menu</span>
    <svg width="125" height="24" viewBox="0 0 125 24">
        <path d="M10 1h22v20H10z" fill="#85ad56"/><path d="M10 1h22v4H10z" fill="#6c9145"/>
        <rect x="44" y="2" width="20" height="20" rx="4" fill="#f58a3c"/><path d="M47 10l4-3 2 4 5-4q5 4 2 9c-3 6-12 5-13-1z" fill="#fff"/><circle cx="54" cy="13" r="2.300" fill="#f58a3c"/>
        <rect x="69" y="2" width="21" height="21" rx="3" fill="#1d1f21" stroke="#111"/>
        <text x="71" y="11" fill="#fff" font-size="8" font-family="Liberation Mono">$_</text>
        <path d="M97 3h9l2 3h6v3H97z" fill="#fff"/><path d="M95 7h21v15H95z" fill="#87ae58"/>
    </svg>
    <div class="task d-flex align-items-center"><svg width="16" height="17"><use href="#fc"/></svg><span>FreeCAD</span></div>
    <div class="task d-flex align-items-center"><svg width="16" height="14"><use href="#folder"/></svg><span>Pictures</span></div>
    <div class="tray d-flex align-items-center ms-auto">
        <div class="ws"><i></i></div>
        <div class="ws"><i class="big"></i></div>
        <div class="ws full"><i class="big"></i></div>
        <div class="ws full"></div>
        <div class="ws"><i></i><i class="thin"></i></div>
        <div class="ws cur"></div>
        <div class="cell c-x"><svg viewBox="0 0 18 18"><path d="M5 0h8l5 9-5 9H5L0 9z" fill="#f08a10"/><path d="M1 12h16l-4 6H5z" fill="#d43c10"/><path d="M5 4l8 10m0-10L5 14" stroke="#3a1400" stroke-width="2"/></svg></div>
        <div class="cell c-sh"><svg viewBox="0 0 18 18"><path d="M9 0l8 3c0 8-2 12-8 15C3 15 1 11 1 3z" fill="#ddd"/><circle cx="9" cy="8" r="5" fill="#3b75b5"/><path d="M9 5v6" stroke="#fff" stroke-width="1.600"/></svg></div>
        <div class="cell"><svg viewBox="0 0 16 16"><rect x="3" y="0" width="10" height="16" rx="5" fill="#ccd4e0"/><path d="M5.500 5l5 5L8 12.500v-9L10.500 6l-5 5" fill="none" stroke="#36425a"/></svg></div>
        <div class="cell"><svg viewBox="0 0 16 16"><path d="M1 1h14v14H1z" fill="#0d9c92"/><path d="M8 2v4m0 4v4M2 8h4m4 0h4M3.500 3.500l3 3m3 3l3 3m0-9l-3 3m-3 3l-3 3" stroke="#fff" stroke-width="1.500"/></svg></div>
        <div class="cell"><svg viewBox="0 0 16 16"><path d="M3 1.500h10v13H3z" fill="none" stroke="#ccc" stroke-width="1.500"/><circle cx="8" cy="7" r="3" fill="#ccc"/><path d="M8 7l3 6" stroke="#333" stroke-width="1.500"/></svg></div>
        <div class="cell"><svg viewBox="0 0 16 16"><circle cx="8" cy="5" r="3.500" fill="#ccc"/><path d="M3 14q0-5 5-5t5 5z" fill="#ccc"/></svg></div>
        <div class="cell"><svg viewBox="0 0 16 16"><path d="M5.500 2h5v4h-5zM1.500 10.500h4.500V14H1.500zM10 10.500h4.500V14H10z" fill="#ccc"/><path d="M8 6v2.500M3.500 11V8.500h9V11" fill="none" stroke="#ccc"/></svg></div>
        <div class="cell"><svg viewBox="0 0 16 16"><path d="M1 6h2l3-3v10l-3-3H1z" fill="#ccc"/><path d="M8 6q1.500 2 0 4.500m2-6.500q3 4 0 8.500m2.500-10q4 5.500 0 11.500" fill="none" stroke="#ccc" stroke-width="1.200"/></svg></div>
        <div class="cell"><svg viewBox="0 0 16 16"><path d="M3.500 3.500q0-1 1-1h7q1 0 1 1v11h-9zM6 1h4v1.500H6z" fill="none" stroke="#ccc" stroke-width="1.300"/><path d="M5 7h6M5 9.500h6M5 12h6" stroke="#ccc" stroke-width="1.400"/></svg></div>
        <span class="clock">Fri Feb&nbsp; 8, 05:07:16 PM</span>
    </div>
</div>

<div class="dialog-win">
    <div class="dlg-title d-flex align-items-center">
        <div class="caption-text flex-fill text-center">Sketch attachment</div>
        <svg width="14" height="14" viewBox="0 0 14 14"><circle cx="7" cy="7" r="7" fill="#9ab87c"/><path d="M4.500 4.500l5 5m0-5l-5 5" stroke="#fff" stroke-width="1.900"/></svg>
    </div>
    <div class="dlg-body">
        <p>Select the method to attach this sketch to selected objects.</p>
        <div class="method boxy d-flex align-items-center justify-content-between"><span>FlatFace (current) (suggested)</span><span class="down"></span></div>
        <div class="btn-line d-flex justify-content-end">
            <button type="button" class="btn ok">OK</button>
            <button type="button" class="btn">Cancel</button>
        </div>
    </div>
</div>
<svg class="pointer" width="14" height="20" viewBox="0 0 14 20"><path d="M1 1v15l3.500-3 2.500 6 3-1.200L7.500 12H12z" fill="#fff" stroke="#111" stroke-width="1.200"/></svg>

<script>
    const icon = name => `<div class="slot"><svg><use href="#${name}"/></svg></div>`;

    // "|" separator, ":" grip, "v" drop-down arrow, "v-" disabled arrow
    function toolbar_html(items) {
        return items.split(' ').map(item => {
            if (item === '|') return '<div class="tb-sep"></div>';
            if (item === ':') return '<div class="grip"></div>';
            if (item === 'v') return '<div class="arr"></div>';
            if (item === 'v-') return '<div class="arr off"></div>';
            return icon(item);
        }).join('');
    }

    document.querySelectorAll('.toolbar').forEach(bar => {
        bar.innerHTML = '<div class="grip first"></div>' + toolbar_html(bar.dataset.items);
    });

    document.querySelector('.toolbar').insertAdjacentHTML('beforeend', `
        <div class="grip"></div>
        <div class="workbench boxy d-flex align-items-center">
            <svg width="17" height="18"><use href="#wb"/></svg>
            <span class="ms-1 me-auto">Part Design</span>
            <span class="down"></span>
        </div>` + toolbar_html(': fitall fitsel drawstyle v | iso | vfront vtop vright | vrear vbottom vleft | measure : rec stop macro play : part group'));

    const tree = [
        [0, 'open', 'doc', 'HoleProblem', 'fw-bold'],
        [1, 'open', 'body', 'Body', ''],
        [2, 'shut', 'origin', 'Origin', 'off'],
        [2, 'open', 'padg', '&lt;MainBlock', 'off'],
        [3, '', 'sk', 'Sketch', 'off'],
        [2, 'open', 'pockg', 'MountingLedge', 'off'],
        [3, '', 'sk', 'Sketch001', 'off'],
        [2, 'open', 'pocksel', 'PrimaryCavity', 'sel'],
        [3, '', 'sk', 'Sketch002', 'off'],
        [2, 'open', 'holeg', 'Hole', 'off fw-bold'],
        [3, '', 'sk', 'Sketch003', '']
    ];
    document.getElementById('tree_rows').innerHTML = tree.map(([level, state, ico, text, cls]) => `
        <div class="tree-row d-flex align-items-center ${cls}">
            <span class="indent i${level}"></span><span class="tw ${state}"></span>
            <svg style="margin-left:4px;color:${cls ? '#999' : '#cc1414'}"><use href="#${ico}"/></svg><span>${text}</span>
        </div>`).join('');

    const props = [
        ['Base'], ['Label', 'PrimaryCavity', 1],
        ['Pocket'], ['Type', 'Length', 1], ['Length', '1.3780 in', 0], ['Length2', '3.9370 in', 1], ['Offset', '0.0000 in', 0],
        ['Sketch Based'], ['Midplane', 'false', 0], ['Revers...', 'true', 1], ['Refine', 'false', 0]
    ];
    document.getElementById('prop_rows').innerHTML = props.map(p => p.length === 1
        ? `<div class="prop-row group d-flex"><div class="pad"></div><div class="pval">${p[0]}</div></div>`
        : `<div class="prop-row d-flex ${p[2] ? 'alt' : ''}"><div class="pad"></div><div class="pname">${p[0]}</div><div class="pval">${p[1]}</div></div>`
    ).join('');
</script>

</body>
</html>
